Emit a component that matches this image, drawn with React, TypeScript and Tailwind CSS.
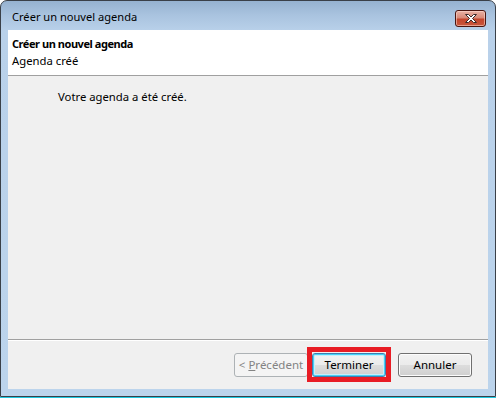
import React from "react";

const font = { fontFamily: '"Noto Sans", "Open Sans", "Liberation Sans", sans-serif' };

function CloseButton() {
  return (
    <div className="mt-[9px] mr-[9px] flex h-[17px] w-[31px] items-center justify-center rounded-[3px] border border-[#4a1610] bg-[linear-gradient(to_bottom,#e9b2a5_0%,#d98a78_45%,#c3452c_55%,#c9573c_100%)] shadow-[inset_0_0_0_1px_rgba(255,220,210,0.55)]">
      <svg width="14" height="11" viewBox="0 0 14 11">
        <path
          d="M1.5 1.5 H4.5 L7 4 L9.5 1.5 H12.5 L8.5 5.5 L12.5 9.5 H9.5 L7 7 L4.5 9.5 H1.5 L5.5 5.5 Z"
          fill="#ffffff"
          stroke="#3b2a2a"
          strokeWidth="1"
          strokeLinejoin="round"
        />
      </svg>
    </div>
  );
}

function Button({
  children,
  disabled,
  focused,
}: {
  children: React.ReactNode;
  disabled?: boolean;
  focused?: boolean;
}) {
  if (disabled) {
    return (
      <div className="flex h-[24px] w-[74px] items-center justify-center rounded-[3px] border border-[#adb2b5] bg-[#f4f4f4] text-[11.5px] text-[#838383]">
        {children}
      </div>
    );
  }
  return (
    <div
      className={
        "flex h-[24px] w-[74px] items-center justify-center rounded-[3px] border text-[11.5px] text-black " +
        (focused
          ? "border-[#3c7fb1] bg-[linear-gradient(to_bottom,#f2f2f2_0%,#ebebeb_50%,#dddddd_50%,#cfcfcf_100%)] shadow-[inset_0_0_0_1px_#48d0f5,inset_0_0_0_2px_#c6eefb]"
          : "border-[#707070] bg-[linear-gradient(to_bottom,#f2f2f2_0%,#ebebeb_50%,#dddddd_50%,#cfcfcf_100%)] shadow-[inset_0_0_0_1px_#fcfcfc]")
      }
    >
      {children}
    </div>
  );
}

export default function App() {
  return (
    <div className="relative h-[398px] w-[496px] bg-white" style={font}>
      <div className="flex h-[397px] w-[496px] flex-col rounded-t-[7px] border border-[#3a4048] bg-[linear-gradient(to_bottom,#96b2d0_0px,#a9c3df_14px,#b9d1ea_30px,#bcd4ec_100%)]">
        {/* Title bar */}
        <div className="flex h-[29px] shrink-0 items-start justify-between">
          <div className="pl-[11px] pt-[8px] text-[11.1px] leading-[16px] text-black">Créer un nouvel agenda</div>
          <CloseButton />
        </div>
        {/* Client area */}
        <div className="flex flex-1 px-[7px] pb-[7px]">
          <div className="flex flex-1 flex-col bg-[#f0f0f0]">
            <div className="flex h-[45px] shrink-0 flex-col bg-white pl-[4px] pt-[5px] text-[11.3px] leading-[17px] text-black">
              <div className="text-[11px] font-bold tracking-[-0.45px]">Créer un nouvel agenda</div>
              <div>Agenda créé</div>
            </div>
            <div className="h-px shrink-0 bg-[#a0a0a0]" />
            <div className="flex-1 pl-[50px] pt-[12px] text-[11.3px] leading-[17px] text-black">
              Votre agenda a été créé.
            </div>
            <div className="h-px shrink-0 bg-[#a0a0a0]" />
            <div className="h-px shrink-0 bg-white" />
            <div className="flex h-[48px] shrink-0 items-start justify-end pr-[16px] pt-[12px]">
              <Button disabled>
                <span>
                  &lt; <span className="underline">P</span>récédent
                </span>
              </Button>
              <div className="relative ml-[4px]">
                <Button focused>Terminer</Button>
                <div className="pointer-events-none absolute -bottom-[5px] -left-[5px] -right-[5px] -top-[6px] border-[5px] border-[#e81c24]" />
              </div>
              <div className="ml-[12px]">
                <Button>Annuler</Button>
              </div>
            </div>
          </div>
        </div>
      </div>
      <div className="h-px w-full bg-[#1ec8e0]" />
    </div>
  );
}
